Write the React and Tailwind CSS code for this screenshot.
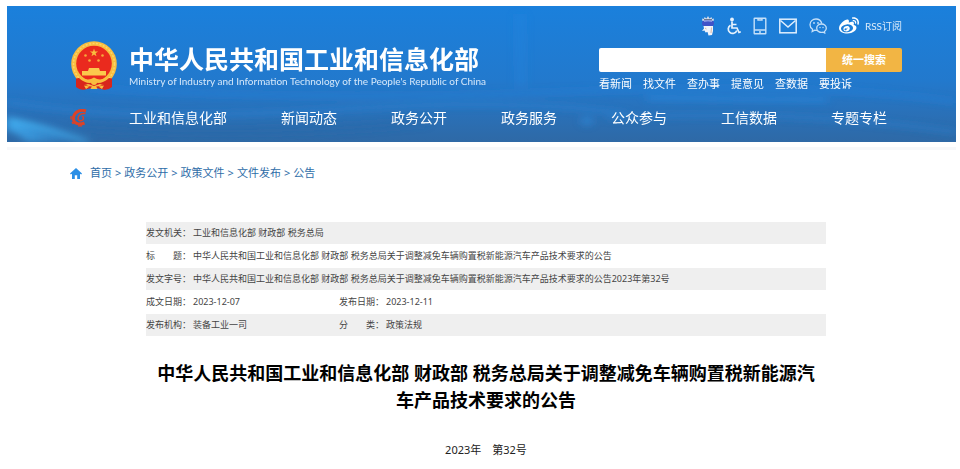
import React, { useState } from 'react';
import { FaWeibo } from 'react-icons/fa';

const navItems = ['工业和信息化部', '新闻动态', '政务公开', '政务服务', '公众参与', '工信数据', '专题专栏'];
const quickLinks = ['看新闻', '找文件', '查办事', '提意见', '查数据', '要投诉'];
const crumbs = ['首页', '政务公开', '政策文件', '文件发布', '公告'];

const fullTitle = '中华人民共和国工业和信息化部 财政部 税务总局关于调整减免车辆购置税新能源汽车产品技术要求的公告';

const rows = [
    [['发文机关：', '工业和信息化部 财政部 税务总局']],
    [['标　　题：', fullTitle]],
    [['发文字号：', `${fullTitle}2023年第32号`]],
    [['成文日期：', '2023-12-07'], ['发布日期：', '2023-12-11']],
    [['发布机构：', '装备工业一司'], ['分　　类：', '政策法规']],
];

// National emblem next to the ministry name
const Emblem = () => (
    <svg viewBox="0 0 48 50" className="w-12 h-[50px] shrink-0" aria-hidden="true">
        <path d="M6 35 L42 35 L42 46 Q38 49.500 33 48.500 L24 46.500 L15 48.500 Q10 49.500 6 46 Z" fill="#d8251c" />
        <circle cx="24" cy="23" r="22.8" fill="#f9bd3f" />
        <circle cx="24" cy="23" r="20.5" fill="none" stroke="#fcd469" strokeWidth="1.5" strokeDasharray="2 1.5" />
        <circle cx="24" cy="22.5" r="17.8" fill="#ea2a1e" />
        <path d="M24 7.500l1 2.900h3.100l-2.500 1.900.9 3-2.500-1.800-2.500 1.800.9-3-2.500-1.900H23z" fill="#f9bd3f" />
        <g fill="#f6a93a">
            <circle cx="15.500" cy="14.500" r="1.300" />
            <circle cx="32.500" cy="14.500" r="1.300" />
            <circle cx="19.500" cy="19.500" r="1.300" />
            <circle cx="28.500" cy="19.500" r="1.300" />
        </g>
        <path d="M19 27h10l1 3h6v4.500H12V30h6z" fill="#fbc94c" />
        <path d="M6 38Q9 36 12 38.500Q18 42 24 39.500Q30 42 36 38.500Q39 36 42 38L41 43Q34 45 30 43L24 45L18 43Q14 45 7 43Z" fill="#d8251c" />
        <path d="M10 35Q17 41 24 36.500Q31 41 38 35L38.500 37.500Q31 44 24 41Q17 44 9.500 37.500Z" fill="#f9bd3f" />
        <circle cx="24" cy="41" r="3" fill="#f9bd3f" />
        <path d="M14 44.500l2 3.500 3.500-2.500zM34 44.500l-2 3.500-3.500-2.500zM22 45h4l1.500 3h-7z" fill="#f9bd3f" />
    </svg>
);

const PartyMark = () => (
    <svg viewBox="0 0 18 18" className="w-[18px] h-[18px]" fill="none" stroke="#dd4226" aria-hidden="true">
        <path d="M16 2C10 0 3.500 3 3.500 9.500c0 4.500 5 7 11 4.500" strokeWidth="3" />
        <path d="M15.500 4.500C11.500 4 8.500 6 8 9c-.3 2.500 2.500 3.500 4.500 2 1.500-1.200 1.500-3-.5-3.500" strokeWidth="1.500" />
        <path d="M1 7v3.500M2 13l1.500 2M8 16.800h4" strokeWidth="1.300" />
    </svg>
);

const Mascot = () => (
    <svg viewBox="0 0 14 20" className="w-3.5 h-5">
        <path d="M1.500 5L1 2.500l2 .5.500-2 2 1.500L7 0l1.500 2.500 2-1.500.5 2 2-.5-.5 2.500z" fill="#d3dbe8" />
        <path d="M3 3.500l8 0" stroke="#6c7893" />
        <rect x="1" y="4.500" width="12" height="5.500" rx="2.500" fill="#4053c8" />
        <path d="M3 5.500Q7 4.300 11 5.500" stroke="#8c9be2" fill="none" />
        <path d="M2.500 10h9.500v5l-1 4-3.500.5L6.500 16l-2 .5-1-2L1 15l2-2.500z" fill="#f1f4fa" />
        <path d="M10.500 11.500l-.5 5.500M4 12l1.500 1" stroke="#d9b7a4" fill="none" />
    </svg>
);

const Wheelchair = () => (
    <svg viewBox="0 0 14 18" className="w-3.5 h-[18px]" fill="none" stroke="#e6f2fd" strokeWidth="1.700">
        <circle cx="5" cy="2.500" r="1.900" fill="#e6f2fd" stroke="none" />
        <path d="M5 4.500v6.500h5l2 4.500 1.800-.8M5 7.500h4.500" />
        <path d="M3.500 8.200A4.400 4.400 0 1 0 9.800 13.500" />
    </svg>
);

const Phone = () => (
    <svg viewBox="0 0 14 18" className="w-3.5 h-[18px]" fill="none" stroke="#c5e0f9" strokeWidth="1.400">
        <rect x="1.200" y="1.200" width="11.600" height="15.600" rx=".5" />
        <path d="M1 13h12M5 1.500v1.500h4V1.500M6 15h2" />
    </svg>
);

const Mail = () => (
    <svg viewBox="0 0 18 16" className="w-[18px] h-4" fill="none" stroke="#e0effd" strokeWidth="1.500">
        <rect x=".8" y="1.200" width="16.400" height="13.600" />
        <path d="M1.500 2.500L9 9l7.500-6.500" />
    </svg>
);

const Wechat = () => (
    <svg viewBox="0 0 18 16" className="w-[18px] h-4" fill="none" stroke="#c5e0f9" strokeWidth="1.300">
        <path d="M12.800 5.500C12 2.800 9.800 1 7 1 3.600 1 1 3.500 1 6.700c0 2 1 3.600 2.600 4.600L3.200 13.500l2.500-1.300c.8.200 1.600.2 2.300.1" />
        <path d="M12.500 6c2.700 0 4.800 1.900 4.800 4.200 0 1.400-.7 2.500-1.800 3.300l.2 1.500-1.700-.8c-3 .800-6.300-.9-6.300-4C7.700 7.900 9.800 6 12.500 6z" />
        <g fill="#c5e0f9" stroke="none">
            <circle cx="5" cy="5" r=".9" />
            <circle cx="9" cy="5" r=".9" />
            <circle cx="11" cy="9.500" r=".7" />
            <circle cx="14" cy="9.500" r=".7" />
        </g>
    </svg>
);

const HomeIcon = () => (
    <svg viewBox="0 0 12 11" className="w-3 h-[11px]" aria-hidden="true">
        <path d="M6 0L0 5.500l.8.900L2 5.800V11h2.800V7.200h2.400V11H10V5.800l1.200.6.8-.9z" fill="#2b8fe6" />
    </svg>
);

// Soft light streaks behind the header
const Waves = () => (
    <svg viewBox="0 0 949 136" preserveAspectRatio="none" className="absolute inset-0 w-full h-full" aria-hidden="true">
        <defs>
            <filter id="soft" x="-20%" y="-100%" width="140%" height="300%">
                <feGaussianBlur stdDeviation="5 3" />
            </filter>
            <linearGradient id="shine" x1="0" x2="1">
                <stop offset="0" stopColor="#43b2f5" stopOpacity="0.9" />
                <stop offset="1" stopColor="#2f8fe0" stopOpacity="0" />
            </linearGradient>
        </defs>
        <g filter="url(#soft)">
            <path d="M0 112Q45 118 90 136L20 136Q10 126 0 124z" fill="url(#shine)" />
            <path d="M0 112Q40 122 80 136" stroke="#4abcf8" strokeWidth="4" fill="none" opacity="0.6" />
            <path d="M0 96Q120 116 320 104T620 108" stroke="#2a86d8" strokeWidth="5" fill="none" opacity="0.5" />
            <path d="M80 82Q300 96 560 86T949 96" stroke="#2384dd" strokeWidth="5" fill="none" opacity="0.5" />
            <path d="M640 92L820 94" stroke="#2b8ae2" strokeWidth="5" opacity="0.6" />
            <path d="M600 112Q780 102 949 126" stroke="#2b82d0" strokeWidth="5" fill="none" opacity="0.5" />
            <path d="M70 120Q240 132 420 116" stroke="#2a66a8" strokeWidth="8" fill="none" opacity="0.4" />
            <path d="M513 8L514 80" stroke="#2c8ee6" strokeWidth="8" opacity="0.35" />
            <circle cx="580" cy="115" r="5" fill="#2f8fe2" opacity="0.6" />
        </g>
    </svg>
);

const iconLinks = [
    { label: '智能助手', icon: <Mascot /> },
    { label: '无障碍', icon: <Wheelchair /> },
    { label: '移动版', icon: <Phone /> },
    { label: '邮箱', icon: <Mail /> },
    { label: '微信', icon: <Wechat /> },
    { label: '微博', icon: <FaWeibo size={20} /> },
];

const SearchBox = () => {
    const [keyword, setKeyword] = useState('');

    return (
        <form onSubmit={(e) => e.preventDefault()} className="flex h-6 rounded-xs overflow-hidden">
            <input
                type="text"
                aria-label="搜索"
                value={keyword}
                onChange={(e) => setKeyword(e.target.value)}
                className="flex-1 min-w-0 bg-white px-2 text-xs text-gray-800 outline-none"
            />
            <button type="submit" className="w-[76px] bg-[#f2b544] text-[11px] font-bold text-white">
                统一搜索
            </button>
        </form>
    );
};

const Header = () => (
    <header className="relative ml-[7px] mr-1 bg-linear-to-b from-[#1a80dc] via-[#2279cd] via-55% to-[#2e69a6] text-white">
        <Waves />
        <div className="relative pl-[63px] pr-[54px] pt-2.5 pb-3.5">
            <div className="flex justify-between">
                <div className="flex items-start pt-[25px]">
                    <Emblem />
                    <div className="pl-[11px] pt-1 font-['Lato','Noto_Sans_CJK_SC',sans-serif]">
                        <p className="text-[25px] leading-7 font-bold whitespace-nowrap">中华人民共和国工业和信息化部</p>
                        <p className="text-[10px] leading-4 text-[#d6e8fa] whitespace-nowrap">
                            Ministry of Industry and Information Technology of the People's Republic of China
                        </p>
                    </div>
                </div>
                <div className="w-[303px]">
                    <div className="flex items-center justify-end gap-3 h-5">
                        {iconLinks.map(item => (
                            <a key={item.label} href="#" aria-label={item.label}>{item.icon}</a>
                        ))}
                        <a href="#" className="-ml-1.5 text-[10px] leading-4 text-[#dcebfa] font-['Lato','Noto_Sans_CJK_SC',sans-serif]">RSS订阅</a>
                    </div>
                    <div className="pt-3">
                        <SearchBox />
                    </div>
                    <div className="flex gap-[11px] pt-1">
                        {quickLinks.map(link => (
                            <a key={link} href="#" className="text-[11px] leading-4">{link}</a>
                        ))}
                    </div>
                </div>
            </div>
            <nav className="flex items-center pt-4 pr-[15px]">
                <a href="#" aria-label="党建" className="w-[59px]"><PartyMark /></a>
                <div className="flex flex-1 justify-between">
                    {navItems.map(item => (
                        <a key={item} href="#" className="text-sm leading-5">{item}</a>
                    ))}
                </div>
            </nav>
        </div>
    </header>
);

const App = () => (
    <div className="bg-white pt-1.5 font-['Noto_Sans','Noto_Sans_CJK_SC',sans-serif]">
        <Header />
        <div className="mt-[5px] ml-[7px] mr-1 h-[3px] bg-[#f7f8fa]" />
        <main>
            <nav aria-label="面包屑" className="flex items-center gap-2 pl-[70px] pt-[15px] text-[11px] leading-4 text-[#2e6da8]">
                <HomeIcon />
                <ol className="flex gap-[3px]">
                    {crumbs.map((crumb, i) => (
                        <li key={crumb} className="flex gap-[3px]">
                            {i > 0 && <span>&gt;</span>}
                            <a href="#">{crumb}</a>
                        </li>
                    ))}
                </ol>
            </nav>
            <div className="pl-[146px] pr-[134px] pt-10">
                <table className="w-full table-fixed border-separate border-spacing-x-0 border-spacing-y-px text-[9px] leading-4 text-[#444]">
                    <colgroup>
                        <col className="w-[47px]" />
                        <col className="w-[146px]" />
                        <col className="w-[47px]" />
                        <col />
                    </colgroup>
                    <tbody>
                        {rows.map((pairs, i) => (
                            <tr key={i} className="h-[22px] odd:bg-[#efefef]">
                                {pairs.map(([label, value]) => (
                                    <React.Fragment key={label}>
                                        <th scope="row" className="p-0 text-left font-normal whitespace-nowrap">{label}</th>
                                        <td colSpan={pairs.length === 1 ? 3 : 1} className="p-0">{value}</td>
                                    </React.Fragment>
                                ))}
                            </tr>
                        ))}
                    </tbody>
                </table>
                <h1 className="px-2 pt-[23px] text-center text-[18px] leading-[27px] font-bold text-black">{fullTitle}</h1>
                <p className="pt-7 pb-2.5 text-center text-[11px] leading-4 text-[#222]">2023年　第32号</p>
            </div>
        </main>
    </div>
);

export default App;
